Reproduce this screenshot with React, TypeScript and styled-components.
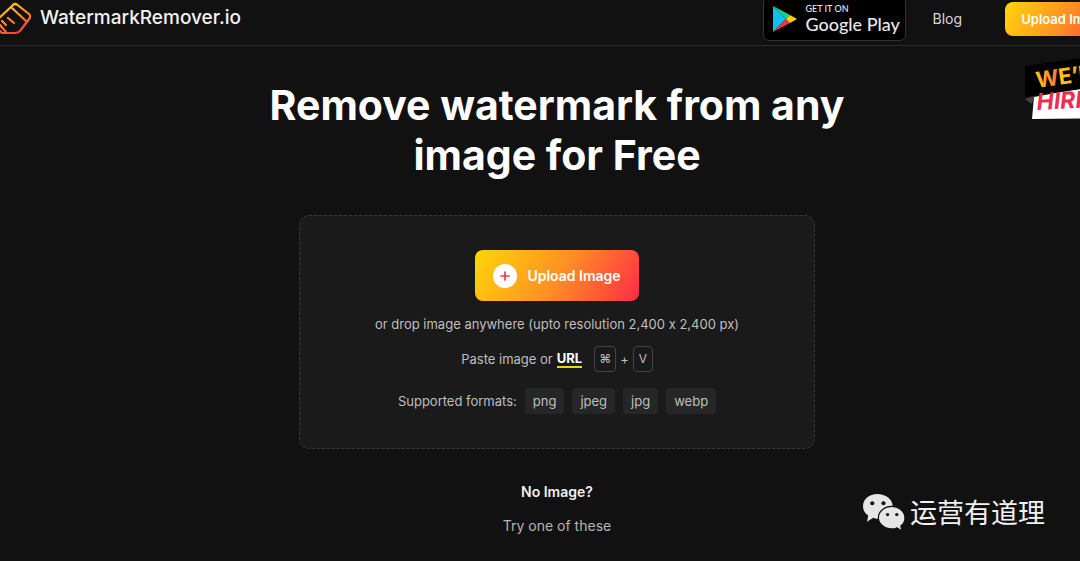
import React from "react";
import styled, { createGlobalStyle } from "styled-components";

const GlobalStyle = createGlobalStyle`
  * { box-sizing: border-box; }
  body {
    margin: 0;
    background: #111;
    color: #fff;
    font-family: Inter, "Noto Sans CJK SC", sans-serif;
    font-feature-settings: "calt" 0;
  }
  button { font-family: inherit; cursor: pointer; }
  svg { flex-shrink: 0; }
`;

const Page = styled.div`
  position: relative;
  min-height: 100vh;
  overflow: hidden;
`;

const Header = styled.header`
  display: flex;
  align-items: center;
  justify-content: space-between;
  height: 46px;
  padding-bottom: 8px;
  border-bottom: 1px solid #2b2b2b;
`;

const Brand = styled.a`
  display: flex;
  align-items: center;
  gap: 8px;
  margin-bottom: 2px;
  color: #f2f2f2;
  font-size: 19px;
  font-weight: 500;
  line-height: 24px;
  text-decoration: none;
`;

const Nav = styled.nav`
  display: flex;
  align-items: center;
  flex-shrink: 0;
  margin-right: -44px;
`;

const StoreBadge = styled.a`
  display: flex;
  align-items: center;
  gap: 7px;
  width: 143px;
  height: 44px;
  padding: 0 8px;
  border: 1px solid #333;
  border-radius: 6px;
  background: #000;
  color: #e8e8e8;
  text-decoration: none;
`;

const StoreText = styled.span`
  display: flex;
  flex-direction: column;
  font-family: Lato, sans-serif;
  font-size: 18px;
  font-weight: 500;
  line-height: 20px;
  white-space: nowrap;
`;

const StoreCaption = styled.small`
  font-size: 9px;
  line-height: 10px;
`;

const NavLink = styled.a`
  margin: 0 43px 0 26px;
  color: #d9d9d9;
  font-size: 14px;
  line-height: 20px;
  text-decoration: none;
`;

const GradientButton = styled.button<{ $large?: boolean }>`
  display: flex;
  align-items: center;
  justify-content: center;
  gap: 10px;
  width: ${(p) => (p.$large ? 164 : 119)}px;
  height: ${(p) => (p.$large ? 51 : 34)}px;
  padding: 0;
  border: 0;
  border-radius: 8px;
  background: linear-gradient(120deg, #ffd60a 0%, #ff9124 50%, #ff2b45 100%);
  color: #fff;
  font-size: ${(p) => (p.$large ? 14 : 13)}px;
  font-weight: 600;
  white-space: nowrap;
`;

const Sticker = styled.a`
  position: absolute;
  top: 54px;
  right: -30px;
  line-height: 0;
`;

const Main = styled.main`
  display: flex;
  flex-direction: column;
  align-items: center;
  padding: 34px 0 24px 34px;
`;

const Title = styled.h1`
  max-width: 620px;
  margin: 0 0 35px;
  font-size: 41px;
  font-weight: 700;
  line-height: 50px;
  text-align: center;
`;

const DropZone = styled.section`
  display: flex;
  flex-direction: column;
  align-items: center;
  width: 100%;
  max-width: 516px;
  margin-bottom: 33px;
  padding: 34px 16px;
  border: 1px dashed #383838;
  border-radius: 10px;
  background: #1a1a1a;
  color: #bfbfbf;
  font-size: 13px;
  line-height: 20px;
`;

const Line = styled.p`
  display: flex;
  align-items: center;
  justify-content: center;
  margin: 0;
`;

const DropHint = styled(Line)`
  margin: 13px 0 12px;
`;

const PasteLine = styled(Line)`
  gap: 4px;
  margin-bottom: 16px;
`;

const UrlLink = styled.a`
  margin-right: 8px;
  border-bottom: 2px solid #e8d80c;
  color: #fff;
  font-weight: 700;
  line-height: 16px;
  text-decoration: none;
`;

const Key = styled.kbd`
  display: grid;
  place-items: center;
  min-width: 20px;
  height: 26px;
  padding: 0 4px;
  border: 1px solid #444;
  border-radius: 4px;
  font-family: inherit;
  font-size: 12px;
`;

const FormatLine = styled(Line)`
  gap: 8px;
`;

const Format = styled.span`
  height: 26px;
  padding: 0 8px;
  border-radius: 3px;
  background: #262626;
  line-height: 26px;
`;

const Question = styled.h2`
  margin: 0 0 14px;
  color: #f0f0f0;
  font-size: 14px;
  font-weight: 600;
  line-height: 20px;
`;

const Hint = styled.p`
  margin: 0;
  color: #b5b5b5;
  font-size: 14px;
  line-height: 20px;
`;

const Account = styled.div`
  position: absolute;
  right: 35px;
  bottom: 29px;
  display: flex;
  align-items: center;
  gap: 4px;
  color: #f2f2f2;
  font-family: "Noto Sans CJK SC", sans-serif;
  font-size: 27px;
  line-height: 40px;
`;

const LogoMark = () => (
  <svg width="32" height="34" viewBox="0 0 32 34" fill="none" aria-hidden="true">
    <defs>
      <linearGradient id="mark" x1="8" y1="4" x2="20" y2="32" gradientUnits="userSpaceOnUse">
        <stop stopColor="#ffc22a" />
        <stop offset="0.5" stopColor="#ff8a30" />
        <stop offset="1" stopColor="#ff3340" />
      </linearGradient>
    </defs>
    <g stroke="url(#mark)" strokeWidth="2.2" strokeLinejoin="round" strokeLinecap="round">
      <path d="M-5 21 13 4Q15 2 17.500 4L29 13Q31 15 29.500 17.500L20 30Q18 32 15 32H2L-5 25" />
      <path d="M12 7 26 20M-1 23 6 31M2 20 6 24M8 17 14 22" />
    </g>
  </svg>
);

const PlayMark = () => (
  <svg width="26" height="28" viewBox="0 0 26 28" aria-hidden="true">
    <path d="M1 1v26l13-13z" fill="#12bdf2" />
    <path d="M1 1l17 9-4 4z" fill="#15d487" />
    <path d="M1 27l17-9-4-4z" fill="#ee3448" />
    <path d="M18 10l7 4-7 4-4-4z" fill="#ffce13" />
  </svg>
);

const PlusMark = () => (
  <svg width="24" height="24" viewBox="0 0 24 24" aria-hidden="true">
    <circle cx="12" cy="12" r="12" fill="#fff" />
    <path d="M12 8v8M8 12h8" stroke="#f5364d" strokeWidth="1.700" strokeLinecap="round" />
  </svg>
);

const HiringSticker = () => (
  <svg width="86" height="68" viewBox="0 0 86 68" role="img" aria-label="We're hiring">
    <defs>
      <linearGradient id="hire" x1="0" x2="1">
        <stop stopColor="#ffc617" />
        <stop offset="0.300" stopColor="#ff7a3a" />
        <stop offset="0.350" stopColor="#ffc617" />
        <stop offset="1" stopColor="#ff8d22" />
      </linearGradient>
    </defs>
    <path d="M1 45 10 42 8 50z" fill="#444" />
    <path d="M10 43 86 29V64L8 65z" fill="#fff" />
    <path d="M1 12 86 0V31L1 43z" fill="#000" />
    <g fontFamily="Inter, sans-serif" fontWeight="700">
      <text x="13" y="34" fontSize="22" fill="url(#hire)" transform="rotate(-8 13 34)">WE’RE</text>
      <text x="13" y="56" fontSize="23" fontStyle="italic" fill="#f02b50" transform="rotate(-3 13 56)">HIRING</text>
    </g>
  </svg>
);

const ChatMark = () => (
  <svg width="44" height="38" viewBox="0 0 43 37" aria-hidden="true">
    <path d="M15 1C7 1 1 6 1 13c0 4 2 7 5 9l-1 6 6-4c2 1 3 1 5 1C24 25 30 20 30 13S23 1 15 1z" fill="#e6e6e6" />
    <path d="M29 13c-7 0-13 5-13 11s6 11 13 11c2 0 4 0 5-1l5 3-1-5c3-2 4-5 4-8 0-6-6-11-13-11z" fill="#e6e6e6" stroke="#111" strokeWidth="1.200" />
    <g fill="#111">
      <circle cx="10" cy="10" r="2" />
      <circle cx="21" cy="10" r="2" />
      <circle cx="25" cy="21" r="1.600" />
      <circle cx="34" cy="21" r="1.600" />
    </g>
  </svg>
);

const formats = ["png", "jpeg", "jpg", "webp"];

export default function App() {
  return (
    <Page>
      <GlobalStyle />
      <Header>
        <Brand href="#">
          <LogoMark />
          WatermarkRemover.io
        </Brand>
        <Nav>
          <StoreBadge href="#">
            <PlayMark />
            <StoreText>
              <StoreCaption>GET IT ON</StoreCaption>
              Google Play
            </StoreText>
          </StoreBadge>
          <NavLink href="#">Blog</NavLink>
          <GradientButton type="button">Upload Image</GradientButton>
        </Nav>
      </Header>
      <Sticker href="#">
        <HiringSticker />
      </Sticker>
      <Main>
        <Title>Remove watermark from any image for Free</Title>
        <DropZone>
          <GradientButton type="button" $large>
            <PlusMark />
            Upload Image
          </GradientButton>
          <DropHint>or drop image anywhere (upto resolution 2,400 x 2,400 px)</DropHint>
          <PasteLine>
            Paste image or <UrlLink href="#">URL</UrlLink>
            <Key>⌘</Key>+<Key>V</Key>
          </PasteLine>
          <FormatLine>
            Supported formats:
            {formats.map((name) => (
              <Format key={name}>{name}</Format>
            ))}
          </FormatLine>
        </DropZone>
        <Question>No Image?</Question>
        <Hint>Try one of these</Hint>
      </Main>
      <Account>
        <ChatMark />
        运营有道理
      </Account>
    </Page>
  );
}
